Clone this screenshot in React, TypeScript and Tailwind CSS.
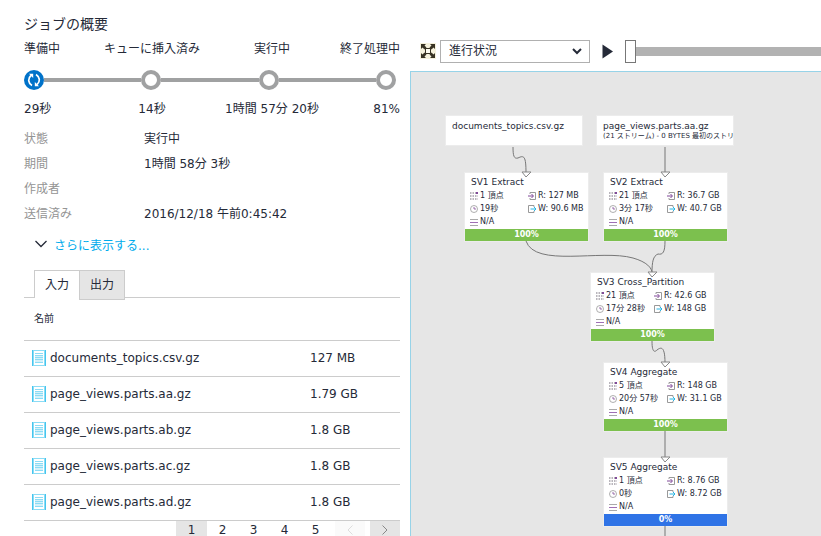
import { clsx } from "clsx";

type Stage = {
	label: string;
	time: string;
	align: string;
};

type Vertex = {
	title: string;
	vertices: string;
	duration: string;
	read: string;
	written: string;
	progress: string;
	// position on the graph canvas
	place: string;
	barColor: string;
};

const stages: Stage[] = [
	{ label: "準備中", time: "29秒", align: "text-left" },
	{ label: "キューに挿入済み", time: "14秒", align: "text-center" },
	{ label: "実行中", time: "1時間 57分 20秒", align: "text-center" },
	{ label: "終了処理中", time: "81%", align: "text-right" },
];

const details = [
	{ term: "状態", value: "実行中" },
	{ term: "期間", value: "1時間 58分 3秒" },
	{ term: "作成者", value: "" },
	{ term: "送信済み", value: "2016/12/18 午前0:45:42" },
];

const files = [
	{ name: "documents_topics.csv.gz", size: "127 MB" },
	{ name: "page_views.parts.aa.gz", size: "1.79 GB" },
	{ name: "page_views.parts.ab.gz", size: "1.8 GB" },
	{ name: "page_views.parts.ac.gz", size: "1.8 GB" },
	{ name: "page_views.parts.ad.gz", size: "1.8 GB" },
];

const vertices: Vertex[] = [
	{
		title: "SV1 Extract",
		vertices: "1 頂点",
		duration: "19秒",
		read: "R: 127 MB",
		written: "W: 90.6 MB",
		progress: "100%",
		place: "left-[54px] top-[101px]",
		barColor: "bg-[#7cc04e]",
	},
	{
		title: "SV2 Extract",
		vertices: "21 頂点",
		duration: "3分 17秒",
		read: "R: 36.7 GB",
		written: "W: 40.7 GB",
		progress: "100%",
		place: "left-[193px] top-[101px]",
		barColor: "bg-[#7cc04e]",
	},
	{
		title: "SV3 Cross_Partition",
		vertices: "21 頂点",
		duration: "17分 28秒",
		read: "R: 42.6 GB",
		written: "W: 148 GB",
		progress: "100%",
		place: "left-[180px] top-[201px]",
		barColor: "bg-[#7cc04e]",
	},
	{
		title: "SV4 Aggregate",
		vertices: "5 頂点",
		duration: "20分 57秒",
		read: "R: 148 GB",
		written: "W: 31.1 GB",
		progress: "100%",
		place: "left-[193px] top-[291px]",
		barColor: "bg-[#7cc04e]",
	},
	{
		title: "SV5 Aggregate",
		vertices: "1 頂点",
		duration: "0秒",
		read: "R: 8.76 GB",
		written: "W: 8.72 GB",
		progress: "0%",
		place: "left-[193px] top-[386px]",
		barColor: "bg-[#2f73e6]",
	},
];

const edges = [
	"M102 75 C102 84 103 87 107 86 C113 83 115 84 115 101",
	"M254 75 V101",
	"M115 169 C124 196 190 177 222 186 C236 190 241 196 241 201",
	"M254 169 C254 180 252 183 247 182 C242 184 241 190 241 201",
	"M241 269 C241 279 243 281 246 278 C251 274 254 276 254 291",
	"M254 359 V386",
	"M254 454 V470",
];

const arrows = [
	"M111 100 H120 L115 105 Z",
	"M250 100 H259 L254 105 Z",
	"M237 200 H246 L241 205 Z",
	"M250 290 H259 L254 295 Z",
	"M250 385 H259 L254 390 Z",
];

const FileIcon = () => (
	<svg className="h-4 w-[14px] shrink-0" viewBox="0 0 14 16" aria-hidden="true">
		<rect x="0.5" y="0.5" width="13" height="15" fill="#fff" stroke="#8bdcf5" />
		<path d="M0.5 0V16M13.5 0V16" stroke="#45c6ef" />
		<path d="M1.5 1V15M12.5 1V15" stroke="#8bdcf5" />
		<rect x="3" y="5" width="8" height="7" fill="#d4f1fa" />
		<path d="M3 3.5H11M3 5.5H11M3 7.5H11M3 9.5H11M3 12.5H11" stroke="#8bdcf5" />
	</svg>
);

const GridIcon = () => (
	<svg className="h-2 w-2" viewBox="0 0 8 8" aria-hidden="true">
		<path d="M0 1H6M0 4H8M0 7H8" stroke="#a39ea6" strokeWidth="1.5" strokeDasharray="1.5 1" />
		<path d="M6 0H8V2H6Z" fill="#804998" />
	</svg>
);

const ClockIcon = () => (
	<svg className="h-2 w-2" viewBox="0 0 8 8" fill="none" aria-hidden="true">
		<circle cx="4" cy="4" r="3.5" stroke="#9b9b9b" strokeWidth="0.8" />
		<path d="M4 2V4H6" stroke="#804998" strokeWidth="0.8" />
	</svg>
);

const LinesIcon = () => (
	<svg className="h-2 w-2" viewBox="0 0 8 8" aria-hidden="true">
		<path d="M0 1.5H8M0 7.5H8" stroke="#aaa" />
		<path d="M0 4.5H8" stroke="#a06fb5" />
	</svg>
);

const ReadIcon = () => (
	<svg className="h-2 w-2" viewBox="0 0 8 8" fill="none" aria-hidden="true">
		<path d="M2 2V0.5H7.5V7.5H2V6" stroke="#999" />
		<path d="M0 4H5M3.5 2L5.5 4L3.5 6" stroke="#804998" />
	</svg>
);

const WriteIcon = () => (
	<svg className="h-2 w-2" viewBox="0 0 8 8" fill="none" aria-hidden="true">
		<path d="M6 2V0.5H0.5V7.5H6V6" stroke="#999" />
		<path d="M2.5 4H7.5M6 2L8 4L6 6" stroke="#28b4e4" />
	</svg>
);

const StageTrack = () => (
	<div className="mr-1 flex h-5 items-center">
		<svg className="size-5 shrink-0" viewBox="0 0 20 20" fill="none" aria-hidden="true">
			<circle cx="10" cy="10" r="10" fill="#0072c9" />
			<path d="M8 15.5C4 13 3.5 8.5 7 5.5" stroke="#fff" strokeWidth="1.7" />
			<path d="M5 3.8H9.2V8Z" fill="#fff" />
			<path d="M12 4.5C16 7 16.5 11.5 13 14.5" stroke="#fff" strokeWidth="1.7" />
			<path d="M15 16.2H10.8V12Z" fill="#fff" />
		</svg>
		{stages.slice(1).map((stage) => (
			<div key={stage.label} className="flex flex-1 items-center">
				<div className="h-1 flex-1 bg-[#a0a1a2]" />
				<div className="size-5 rounded-full border-4 border-[#a0a1a2] bg-white" />
			</div>
		))}
	</div>
);

const JobSummary = () => (
	<section className="flex min-w-0 flex-col pt-[13px]">
		<h1 className="text-[14px] leading-[22px]">ジョブの概要</h1>
		<div className="mt-[5px] grid grid-cols-[68fr_120fr_120fr_68fr] leading-[18px] whitespace-nowrap">
			{stages.map((stage) => (
				<span key={stage.label} className={stage.align}>
					{stage.label}
				</span>
			))}
		</div>
		<div className="mt-3 mb-[10px]">
			<StageTrack />
		</div>
		<div className="grid grid-cols-[68fr_120fr_120fr_68fr] leading-[18px] whitespace-nowrap">
			{stages.map((stage) => (
				<span key={stage.label} className={stage.align}>
					{stage.time}
				</span>
			))}
		</div>

		<dl className="mt-[9px] grid grid-cols-[120px_1fr] leading-[25px]">
			{details.map((detail) => (
				<div key={detail.term} className="contents">
					<dt className="text-[#949494]">{detail.term}</dt>
					<dd>{detail.value}</dd>
				</div>
			))}
		</dl>

		<a href="#details" className="mt-[10px] flex h-6 items-center pl-[11px] text-[#00abec]">
			<svg className="mr-[7px] mb-1 h-2 w-3" viewBox="0 0 12 8" fill="none" aria-hidden="true">
				<path d="M0.5 1L6 6.5L11.5 1" stroke="#252a38" strokeWidth="1.3" />
			</svg>
			さらに表示する...
		</a>

		<div role="tablist" className="mt-[15px] flex h-7 items-start border-b border-[#ccc] pl-[10px]">
			<button
				role="tab"
				aria-selected="true"
				className="h-7 w-[45px] border-t border-l border-[#ccc] bg-white"
			>
				入力
			</button>
			<button
				role="tab"
				aria-selected="false"
				className="h-[30px] w-[46px] border border-[#ccc] bg-[#e5e5e5]"
			>
				出力
			</button>
		</div>

		<table className="w-full">
			<thead>
				<tr className="h-[42px] border-b border-[#ccc] text-left text-[10px]">
					<th className="pl-[10px] font-normal" colSpan={2}>
						名前
					</th>
				</tr>
			</thead>
			<tbody>
				{files.map((file) => (
					<tr key={file.name} className="h-9 border-b border-[#ccc]">
						<td className="pl-2">
							<div className="flex items-center gap-1">
								<FileIcon />
								{file.name}
							</div>
						</td>
						<td className="w-[90px]">{file.size}</td>
					</tr>
				))}
			</tbody>
		</table>

		<nav className="flex h-[22px] justify-end" aria-label="ページ">
			{["1", "2", "3", "4", "5"].map((page) => (
				<button key={page} className={clsx("w-[31px]", page === "1" && "bg-[#e5e5e5]")}>
					{page}
				</button>
			))}
			<button
				disabled
				aria-label="前へ"
				className="ml-1 flex w-[30px] items-center justify-center bg-[#fafafa] text-[#ddd]"
			>
				<svg className="h-[10px] w-[6px]" viewBox="0 0 6 10" fill="none" aria-hidden="true">
					<path d="M5.5 0.5L1 5L5.5 9.5" stroke="currentColor" />
				</svg>
			</button>
			<button
				aria-label="次へ"
				className="ml-[5px] flex w-[30px] items-center justify-center bg-[#e5e5e5] text-[#888]"
			>
				<svg className="h-[10px] w-[6px]" viewBox="0 0 6 10" fill="none" aria-hidden="true">
					<path d="M0.5 0.5L5 5L0.5 9.5" stroke="currentColor" />
				</svg>
			</button>
		</nav>
	</section>
);

const Toolbar = () => (
	<div className="flex h-6 items-center pl-[10px]">
		<button aria-label="全体を表示">
			<svg className="size-4" viewBox="0 0 16 16" fill="none" aria-hidden="true">
				<rect width="16" height="16" fill="#f6f2dc" />
				<path
					d="M1 1H6L4.5 2.5L6.5 4.5L4.5 6.5L2.5 4.5L1 6ZM15 1V6L13.5 4.5L11.5 6.5L9.5 4.5L11.5 2.5L10 1ZM1 15V10L2.5 11.5L4.5 9.5L6.5 11.5L4.5 13.5L6 15ZM15 15H10L11.5 13.5L9.5 11.5L11.5 9.5L13.5 11.5L15 10Z"
					fill="#383323"
				/>
				<rect x="5.5" y="5.5" width="5" height="5" fill="#fffdf0" stroke="#383323" />
			</svg>
		</button>
		<div className="ml-1 grid w-[150px] items-center">
			<select
				aria-label="表示"
				className="col-start-1 row-start-1 h-[23px] appearance-none border border-[#b0b0b0] bg-white pl-2"
			>
				<option>進行状況</option>
			</select>
			<svg
				className="pointer-events-none col-start-1 row-start-1 mr-2 h-[7px] w-[10px] justify-self-end"
				viewBox="0 0 10 7"
				fill="none"
				aria-hidden="true"
			>
				<path d="M1 1L5 5L9 1" stroke="#252a38" strokeWidth="2" />
			</svg>
		</div>
		<button aria-label="再生" className="ml-3">
			<svg className="h-[15px] w-[11px]" viewBox="0 0 11 15" aria-hidden="true">
				<path d="M0.5 0.5L11 7.5L0.5 14.5Z" fill="#252a38" />
			</svg>
		</button>
		<input
			type="range"
			aria-label="再生位置"
			min={0}
			max={100}
			defaultValue={0}
			className="ml-3 h-[23px] min-w-0 flex-1 appearance-none bg-transparent [&::-webkit-slider-runnable-track]:h-[9px] [&::-webkit-slider-runnable-track]:bg-[#b2b2b2] [&::-webkit-slider-thumb]:-mt-[7px] [&::-webkit-slider-thumb]:h-[23px] [&::-webkit-slider-thumb]:w-[11px] [&::-webkit-slider-thumb]:appearance-none [&::-webkit-slider-thumb]:border [&::-webkit-slider-thumb]:border-[#777] [&::-webkit-slider-thumb]:bg-white"
		/>
	</div>
);

const VertexCard = ({ vertex }: { vertex: Vertex }) => (
	<article
		className={clsx(
			"absolute w-[123px] bg-white text-[8px] leading-[13px] whitespace-nowrap ring-1 ring-[#ececec]",
			vertex.place,
		)}
	>
		<div className="h-14 pt-[3px]">
			<h2 className="pl-[6px] text-[9px]">{vertex.title}</h2>
			<div className="grid grid-cols-[58px_1fr] pl-[5px]">
				<span className="flex items-center gap-[2px]">
					<GridIcon />
					{vertex.vertices}
				</span>
				<span className="flex items-center gap-[2px]">
					<ReadIcon />
					{vertex.read}
				</span>
				<span className="flex items-center gap-[2px]">
					<ClockIcon />
					{vertex.duration}
				</span>
				<span className="flex items-center gap-[2px]">
					<WriteIcon />
					{vertex.written}
				</span>
				<span className="flex items-center gap-[2px]">
					<LinesIcon />
					N/A
				</span>
			</div>
		</div>
		<div className={clsx("text-center leading-[12px] font-bold text-white", vertex.barColor)}>
			{vertex.progress}
		</div>
	</article>
);

const JobGraph = () => (
	<section className="flex min-w-0 flex-col pt-[39px]">
		<Toolbar />
		<div className="relative mt-2 min-h-0 flex-1 overflow-hidden border-t border-l border-[#97d3e8] bg-[#e6e6e6]">
			<div className="absolute top-[44px] left-[35px] h-[29px] w-[136px] bg-white pt-1 pl-[6px] text-[9px] leading-[12px] ring-1 ring-[#ececec]">
				documents_topics.csv.gz
			</div>
			<div className="absolute top-[44px] left-[186px] h-[29px] w-[136px] bg-white pt-1 pl-[6px] text-[9px] leading-[12px] whitespace-nowrap ring-1 ring-[#ececec]">
				page_views.parts.aa.gz
				<p className="text-[7px] leading-[8px]">(21 ストリーム) - 0 BYTES 最初のストリ</p>
			</div>
			{vertices.map((vertex) => (
				<VertexCard key={vertex.title} vertex={vertex} />
			))}
			{/* connectors are drawn last so the arrow heads overlap the cards */}
			<svg
				className="pointer-events-none absolute top-0 left-0 h-[470px] w-[410px]"
				viewBox="0 0 410 470"
				aria-hidden="true"
			>
				{edges.map((d) => (
					<path key={d} d={d} fill="none" stroke="#777" />
				))}
				{arrows.map((d) => (
					<path key={d} d={d} fill="#fff" stroke="#888" />
				))}
			</svg>
		</div>
	</section>
);

export default function App() {
	return (
		<main className="grid h-screen grid-cols-[376fr_411fr] grid-rows-[100%] gap-[10px] overflow-hidden bg-white pl-6 font-['DejaVu_Sans','Noto_Sans_CJK_JP',sans-serif] text-[12px] text-[#252a38]">
			<JobSummary />
			<JobGraph />
		</main>
	);
}
